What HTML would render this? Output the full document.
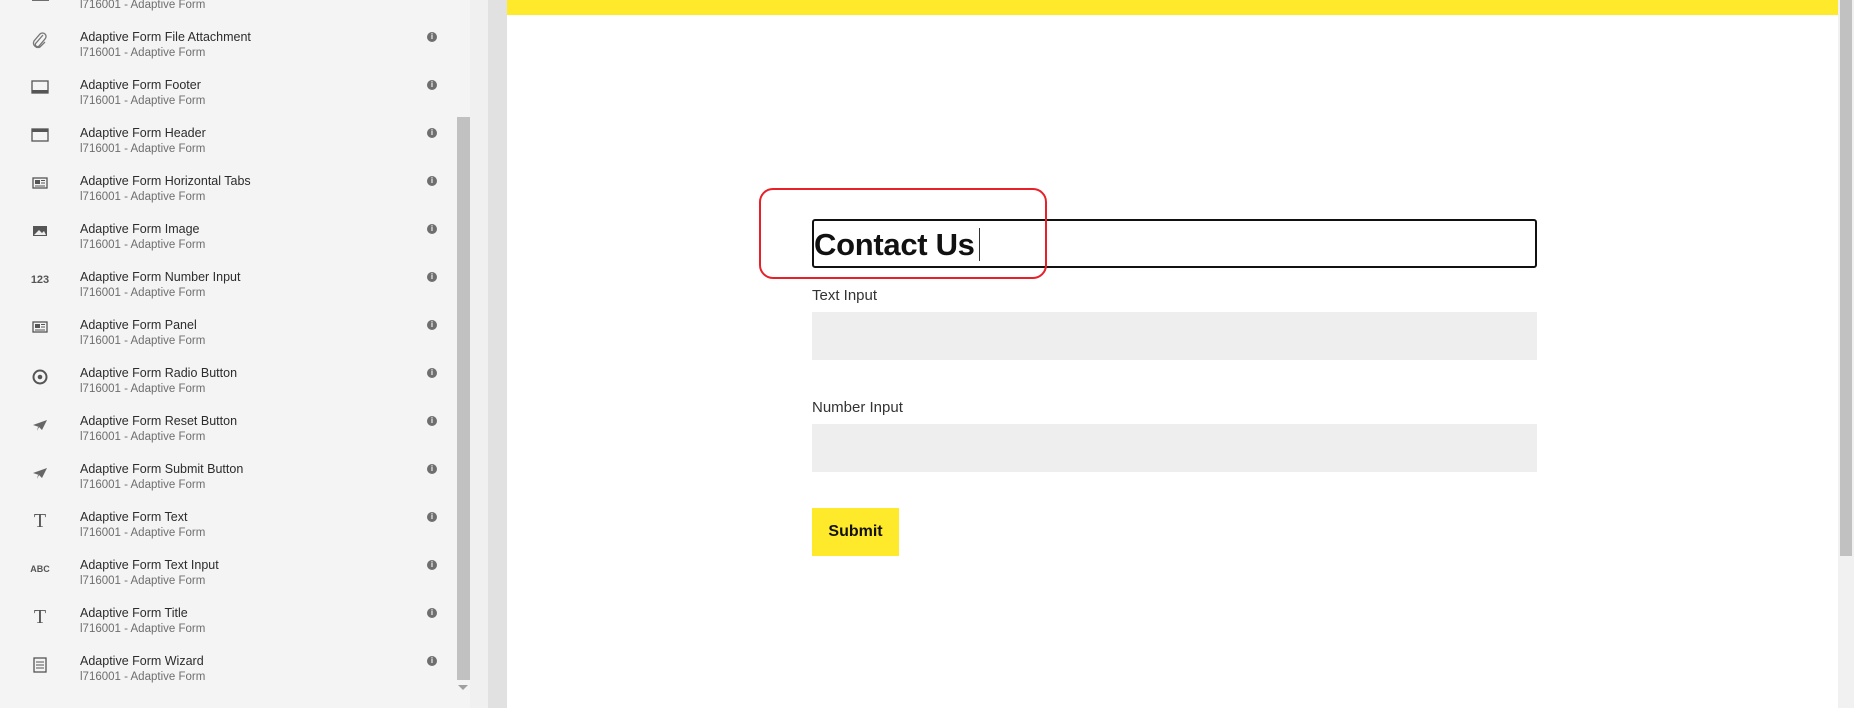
<!DOCTYPE html>
<html><head><meta charset="utf-8"><style>
*{margin:0;padding:0;box-sizing:border-box}
body{width:1854px;height:708px;overflow:hidden;background:#fff;font-family:"Liberation Sans",Arial,sans-serif;position:relative}
.panel{position:absolute;left:0;top:0;width:457px;height:708px;background:#f4f4f4}
.track{position:absolute;left:457px;top:0;width:13px;height:708px;background:#f4f4f4}
.thumb{position:absolute;left:457px;top:117px;width:13px;height:563px;background:#c1c1c1}
.strip{position:absolute;left:470px;top:0;width:18px;height:708px;background:#f0f0f0}
.gutter{position:absolute;left:488px;top:0;width:19px;height:708px;background:#e1e1e1}
.t{position:absolute;left:80px;font-size:12.5px;color:#2c2c2c;line-height:16px}
.s{position:absolute;left:80px;font-size:11.5px;color:#6e6e6e;line-height:16px}
.info{position:absolute;left:427px;width:10px;height:10px;border-radius:50%;background:#6e6e6e;color:#f4f4f4;font-size:8px;font-weight:bold;text-align:center;line-height:10px}
.ic{position:absolute;left:28px;width:24px;height:20px;color:#6e6e6e;font-size:11px;font-weight:bold;text-align:center}
.yellow{position:absolute;left:507px;top:0;width:1331px;height:15px;background:#ffe92b}
.rs{position:absolute;left:1838px;top:0;width:16px;height:708px;background:#f1f1f1}
.rt{position:absolute;left:1840px;top:0;width:12px;height:556px;background:#c1c1c1}
.title{position:absolute;left:812px;top:219px;width:725px;height:49px;border:2px solid #111;border-radius:3px}
.title span{position:absolute;left:0;top:6px;font-size:31px;font-weight:bold;color:#111;letter-spacing:-0.3px}
.caret{position:absolute;left:165px;top:7px;width:1px;height:33px;background:#333}
.red{position:absolute;left:759px;top:188px;width:288px;height:91px;border:2px solid #e8202a;border-radius:14px}
.lab{position:absolute;left:812px;font-size:15px;color:#333}
.inp{position:absolute;left:812px;width:725px;height:48px;background:#eee}
.btn{position:absolute;left:812px;top:508px;width:87px;height:48px;background:#ffe92b;font-size:16px;font-weight:bold;color:#111;text-align:center;line-height:48px}
</style></head><body>
<div class="panel"></div><div class="track"></div><div class="thumb"></div><div class="strip"></div><div class="gutter"></div>
<div style="position:absolute;left:458px;top:685px;width:0;height:0;border-left:5px solid transparent;border-right:5px solid transparent;border-top:5px solid #a0a0a0"></div>
<div class="s" style="top:-3px">l716001 - Adaptive Form</div>
<div style="position:absolute;left:32px;top:-2px;width:17px;height:3px;background:#6e6e6e"></div>

<div id="list"></div>
<script>
var names=["File Attachment","Footer","Header","Horizontal Tabs","Image","Number Input","Panel","Radio Button","Reset Button","Submit Button","Text","Text Input","Title","Wizard"];
var icons=[
'<svg width="20" height="20" viewBox="0 0 20 20"><path d="M13 4 L6 12 a2 2 0 0 0 3 3 L15 8 a3.5 3.5 0 0 0-5-5 L4 10 a4.5 4.5 0 0 0 6 6 l5-5" fill="none" stroke="#777" stroke-width="1.3"/></svg>',
'<svg width="20" height="16" viewBox="0 0 20 16"><rect x="2" y="2" width="16" height="12" fill="none" stroke="#555" stroke-width="1.3"/><rect x="2" y="11" width="16" height="3" fill="#555"/></svg>',
'<svg width="20" height="16" viewBox="0 0 20 16"><rect x="2" y="2" width="16" height="12" fill="none" stroke="#555" stroke-width="1.3"/><rect x="2" y="2" width="16" height="3" fill="#555"/></svg>',
'<svg width="20" height="16" viewBox="0 0 20 16"><rect x="3" y="3" width="14" height="10" fill="none" stroke="#555" stroke-width="1.3"/><rect x="5" y="5" width="5" height="4" fill="#555"/><path d="M11 5.5h4M11 8h4M5 11h10" stroke="#555"/></svg>',
'<svg width="20" height="16" viewBox="0 0 20 16"><rect x="3" y="3" width="14" height="10" fill="#555"/><path d="M4 12 L9 7 L12 10 L14 8 L16 12Z" fill="#eee"/></svg>',
'<div style="font-size:11px;color:#555;padding-top:3px">123</div>',
'<svg width="20" height="16" viewBox="0 0 20 16"><rect x="3" y="3" width="14" height="10" fill="none" stroke="#555" stroke-width="1.3"/><rect x="5" y="5" width="5" height="4" fill="#555"/><path d="M11 5.5h4M11 8h4M5 11h10" stroke="#555"/></svg>',
'<svg width="20" height="20" viewBox="0 0 20 20"><circle cx="10" cy="10" r="6.5" fill="none" stroke="#555" stroke-width="2"/><circle cx="10" cy="10" r="2.3" fill="#555"/></svg>',
'<svg width="20" height="20" viewBox="0 0 20 20"><path d="M3 10 L17 5 L12 15 L9 12Z" fill="#666"/><path d="M9 12 L7 16 L8 12Z" fill="#666"/></svg>',
'<svg width="20" height="20" viewBox="0 0 20 20"><path d="M3 10 L17 5 L12 15 L9 12Z" fill="#666"/><path d="M9 12 L7 16 L8 12Z" fill="#666"/></svg>',
'<div style="font-family:Liberation Serif,serif;font-size:20px;color:#555;font-weight:normal;line-height:20px">T</div>',
'<div style="font-size:9px;color:#555;padding-top:5px">ABC</div>',
'<div style="font-family:Liberation Serif,serif;font-size:20px;color:#555;font-weight:normal;line-height:20px">T</div>',
'<svg width="20" height="20" viewBox="0 0 20 20"><rect x="4" y="3" width="12" height="14" fill="none" stroke="#555" stroke-width="1.3"/><path d="M6 7h8M6 10h8M6 13h8" stroke="#555"/></svg>'];
var h="";
for(var i=0;i<14;i++){var y=29+i*48;
h+='<div class="t" style="top:'+y+'px">Adaptive Form '+names[i]+'</div>';
h+='<div class="s" style="top:'+(y+16)+'px">l716001 - Adaptive Form</div>';
h+='<div class="info" style="top:'+(y+3)+'px">i</div>';
h+='<div class="ic" style="top:'+(y+2)+'px">'+icons[i]+'</div>';}
document.getElementById("list").innerHTML=h;
</script>
<div class="yellow"></div>
<div class="rs"></div><div class="rt"></div>
<div class="title"><span>Contact Us</span><div class="caret"></div></div>
<div class="red"></div>
<div class="lab" style="top:287px">Text Input</div>
<div class="inp" style="top:312px"></div>
<div class="lab" style="top:399px">Number Input</div>
<div class="inp" style="top:424px"></div>
<div class="btn">Submit</div>
</body></html>
